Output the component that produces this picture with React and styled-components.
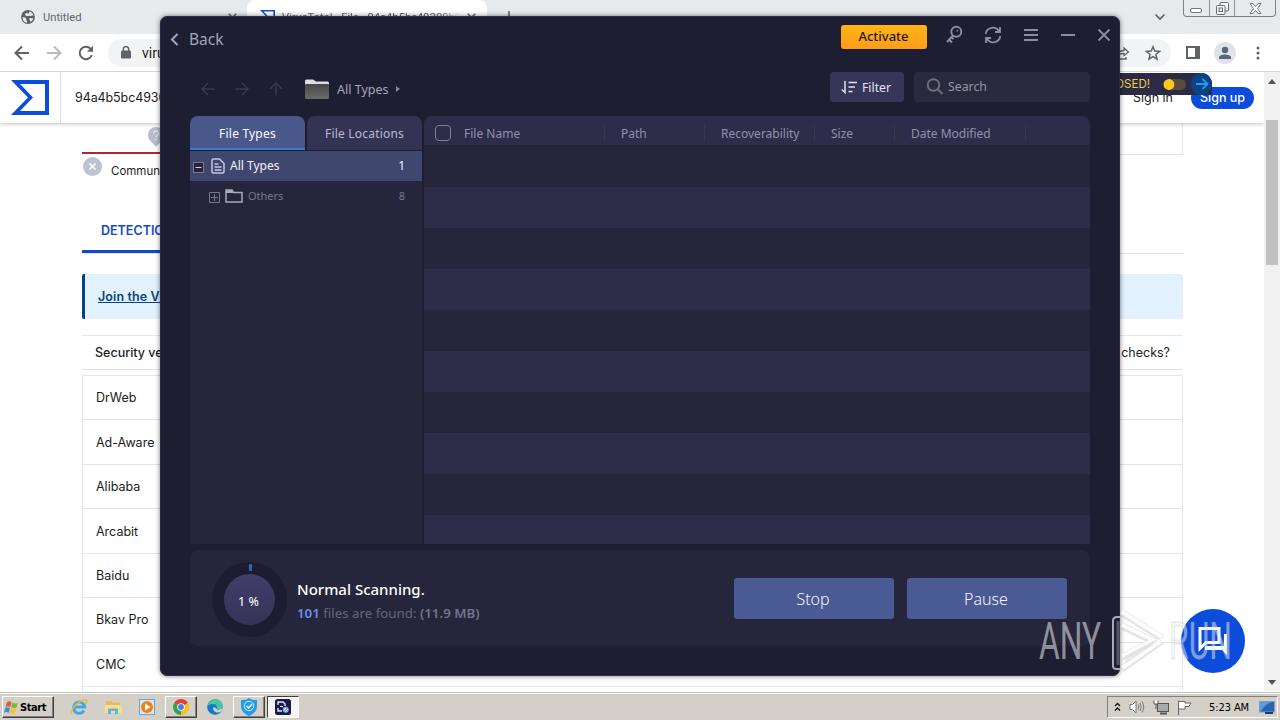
import React from 'react';
import styled, { createGlobalStyle } from 'styled-components'


const vendors = ['DrWeb', 'Ad-Aware', 'Alibaba', 'Arcabit', 'Baidu', 'Bkav Pro', 'CMC']

const columns = [
  { name: 'File Name', width: 141 },
  { name: 'Path', width: 100 },
  { name: 'Recoverability', width: 110 },
  { name: 'Size', width: 80 },
  { name: 'Date Modified', width: 131 },
]

export default function App(){
  return(
    <Desktop>
      <GlobalStyle />
      <Browser>
        <TabStrip />
        <AddressBar />
        <Content>
          <Page>
            <SiteHeader />
            <Report />
          </Page>
          <Scrollbar>
            <Arrow $up />
            <Thumb />
            <Arrow />
          </Scrollbar>
        </Content>
      </Browser>
      <Taskbar />
      <Notice>
        <span>DISCLOSED!</span>
        <Toggle />
        <Go>
          <svg width="14" height="14" viewBox="0 0 14 14" fill="none" stroke="#1b9df0" strokeWidth="1.800">
            <path d="M1 7h11.500M7.500 2l5 5-5 5" />
          </svg>
        </Go>
      </Notice>
      <ChatButton>
        <svg width="32" height="32" viewBox="0 0 32 32" fill="none" stroke="#fff" strokeWidth="3">
          <path d="M3 3.500h19v14H9l-6 6z" />
          <path d="M27 9v12H8v4h17l5 5V9z" fill="#fff" stroke="none" />
        </svg>
      </ChatButton>
      <ScanWindow />
      <Watermark />
    </Desktop>
  )
}

function TabStrip(){
  return(
    <Strip>
      <IdleTab>
        <svg width="14" height="14" viewBox="0 0 14 14">
          <circle cx="7" cy="7" r="6.900" fill="#5b5f63" />
          <path d="M1.500 7.300c2 0 3 .2 3.600 1.200.5 1-.2 2 1 2.300v2c-3-.3-4.700-2.600-4.600-5.500zM5 3c1.500-.5 1.500 1 2.600.4C8.500 2.800 8 2 8.500 1.600c2 .5 3.500 2 4 4-1.500-.5-2 .6-3.500.3C7.500 5.700 7 6.500 5.500 6 4 5.500 3.500 4 5 3zM8.500 8.300c1.500-.6 2.500.3 3.800 0-.5 1.800-1.400 2.800-2.800 3.600-.2-1.500-1.700-2-1-3.600z" fill="#e7eaed" />
        </svg>
        <span>Untitled</span>
        <TabClose />
      </IdleTab>
      <ActiveTab>
        <VtLogo size={15} />
        <span>VirusTotal - File - 94a4b5bc49309b95</span>
        <TabClose />
      </ActiveTab>
      <NewTab>
        <svg width="12" height="12" viewBox="0 0 12 12" stroke="#5f6368" strokeWidth="1.600">
          <path d="M6 0v12M0 6h12" />
        </svg>
      </NewTab>
      <TabMenu>
        <svg width="12" height="8" viewBox="0 0 12 8" fill="none" stroke="#5f6368" strokeWidth="1.700">
          <path d="M1.500 1.500L6 6l4.500-4.500" />
        </svg>
      </TabMenu>
      <WindowControls>
        <Control $width={25}>
          <svg width="12" height="5"><rect x=".5" y=".5" width="11" height="4" rx="1.500" fill="#fff" stroke="#70757c" /></svg>
        </Control>
        <Control $width={25}>
          <svg width="13" height="13" viewBox="0 0 13 13" fill="#f6f7f8" stroke="#666b73">
            <rect x="4" y=".500" width="8.500" height="8.500" rx="1" />
            <rect x=".500" y="3.500" width="8.500" height="9" rx="1" />
            <rect x="3" y="6" width="3.500" height="3.500" />
          </svg>
        </Control>
        <Control $width={41}>
          <svg width="13" height="11" viewBox="0 0 13 11" fill="#fff" stroke="#666b73" strokeWidth=".9">
            <path d="M1 .5h3L6.500 3.500 9 .500h3L8.500 5.500 12 10.500H9L6.500 7.500 4 10.500H1l3.500-5z" />
          </svg>
        </Control>
      </WindowControls>
    </Strip>
  )
}

function TabClose(){
  return(
    <svg width="9" height="9" viewBox="0 0 9 9" stroke="#5f6368" strokeWidth="1.500">
      <path d="M.8.8l7.400 7.400M8.200.8L.8 8.200" />
    </svg>
  )
}

function VtLogo({ size }){
  return(
    <svg width={size} height={size * 35 / 38} viewBox="0 0 38 35">
      <path fill="#0b4dda" fillRule="evenodd" d="M0 0h38v35H0l17-17.500zM9 4l13 13.500L9 31h25V4z" />
    </svg>
  )
}

function AddressBar(){
  return(
    <Toolbar>
      <NavIcons>
        <svg width="16" height="16" viewBox="0 0 16 16" fill="none" stroke="#5f6368" strokeWidth="2">
          <path d="M15 8H2M8 1.500L1.500 8 8 14.500" />
        </svg>
        <svg width="16" height="16" viewBox="0 0 16 16" fill="none" stroke="#b9bbbe" strokeWidth="2">
          <path d="M1 8h13M8 1.500L14.500 8 8 14.500" />
        </svg>
        <svg width="16" height="16" viewBox="0 0 16 16" fill="none" stroke="#5f6368" strokeWidth="2">
          <path d="M13.800 10A6.200 6.200 0 1 1 12.500 3.700L14 5.200" />
          <path d="M15 .8v6H9z" fill="#5f6368" stroke="none" />
        </svg>
      </NavIcons>
      <Omnibox>
        <svg width="10" height="13" viewBox="0 0 10 13">
          <rect x="0" y="4.500" width="10" height="8" rx="1.200" fill="#5f6368" />
          <path d="M2.300 5V3.200a2.700 2.700 0 0 1 5.400 0V5" fill="none" stroke="#5f6368" strokeWidth="1.500" />
        </svg>
        <span>virustotal.com</span>
        <OmniActions>
          <svg width="15" height="14" viewBox="0 0 15 14" fill="none" stroke="#5f6368" strokeWidth="1.300">
            <path d="M1 8v5h10v-2M3 9c.5-3 3-4.500 6-4.500V2l4.500 4L9 9.500V7.300C6.500 7.300 4.500 7.500 3 9z" />
          </svg>
          <svg width="16" height="16" viewBox="0 0 16 16" fill="none" stroke="#5f6368" strokeWidth="1.500">
            <path d="M8 1.800l1.800 4.300 4.700.4-3.600 3 1.100 4.600L8 11.700l-4 2.400 1.100-4.600-3.600-3 4.700-.4z" />
          </svg>
        </OmniActions>
      </Omnibox>
      <SidePanel />
      <Avatar>
        <svg width="14" height="14" viewBox="0 0 14 14" fill="#5a6482">
          <circle cx="7" cy="4" r="3.200" />
          <path d="M1 13v-1.500C1 9.500 4 8.500 7 8.500s6 1 6 3V13z" />
        </svg>
      </Avatar>
      <svg width="4" height="14" viewBox="0 0 4 14" fill="#5f6368">
        <circle cx="2" cy="2" r="1.500" /><circle cx="2" cy="7" r="1.500" /><circle cx="2" cy="12" r="1.500" />
      </svg>
    </Toolbar>
  )
}

function SiteHeader(){
  return(
    <Header>
      <LogoCell><VtLogo size={38} /></LogoCell>
      <Hash>94a4b5bc49309b95</Hash>
      <SignIn>Sign in</SignIn>
      <SignUp>Sign up</SignUp>
    </Header>
  )
}

function Report(){
  return(
    <Column>
      <ScoreRow>
        <Score>
          <svg width="18" height="22" viewBox="0 0 18 22">
            <path d="M9 1a8 8 0 0 1 8 8c0 5-4 7-8 12C5 16 1 14 1 9a8 8 0 0 1 8-8z" fill="#b5bccb" />
            <path d="M6.500 7.500a2.500 2.500 0 1 1 3.500 2.300c-.8.4-1 .8-1 1.700M9 13v1.500" fill="none" stroke="#e6e9f0" strokeWidth="1.300" />
          </svg>
        </Score>
        <Summary />
      </ScoreRow>
      <Community>
        <svg width="19" height="19" viewBox="0 0 19 19">
          <circle cx="9.500" cy="9.500" r="9.500" fill="#bcc2d1" />
          <path d="M6.500 6.500l6 6M12.500 6.500l-6 6" stroke="#fff" strokeWidth="1.700" />
        </svg>
        <span>Community Score</span>
      </Community>
      <ReportTabs><b>DETECTION</b></ReportTabs>
      <JoinBanner><a href="#">Join the VT Community</a></JoinBanner>
      <VendorHead>
        <b>Security vendors' analysis</b>
        <span>Do you want to automate checks?</span>
      </VendorHead>
      <VendorTable>
        {vendors.map(name => <VendorRow key={name}>{name}</VendorRow>)}
      </VendorTable>
    </Column>
  )
}

function ScanWindow(){
  return(
    <Window>
      <TitleBar>
        <Back>
          <svg width="9" height="13" viewBox="0 0 9 13" fill="none" stroke="#a4a4bc" strokeWidth="2">
            <path d="M7.500 1L2 6.500 7.500 12" />
          </svg>
          <span>Back</span>
        </Back>
        <Activate>Activate</Activate>
        <TitleIcons>
          <svg width="18" height="20" viewBox="0 0 18 20" fill="none" stroke="#8c8ca6" strokeWidth="1.900">
            <circle cx="11.300" cy="6.700" r="5" />
            <path d="M8 10.500L2 17M4 14.500l3 3M6.300 12l2.200 2.200" />
            <circle cx="12.300" cy="5.700" r=".9" fill="#8c8ca6" stroke="none" />
          </svg>
          <svg width="18" height="18" viewBox="0 0 18 18" fill="none" stroke="#8c8ca6" strokeWidth="1.800">
            <path d="M1.700 8A7.300 7.300 0 0 1 15 5M16.300 10A7.300 7.300 0 0 1 3 13M16 1v5h-5M2 17v-5h5" />
          </svg>
          <svg width="16" height="14" viewBox="0 0 16 14" stroke="#8c8ca6" strokeWidth="2">
            <path d="M1 2h14M1 7h14M1 12h14" />
          </svg>
          <svg width="16" height="14" viewBox="0 0 16 14" stroke="#8c8ca6" strokeWidth="2">
            <path d="M1 7h14" />
          </svg>
          <svg width="14" height="14" viewBox="0 0 14 14" stroke="#8c8ca6" strokeWidth="1.900">
            <path d="M1.500 1.500l11 11M12.500 1.500l-11 11" />
          </svg>
        </TitleIcons>
      </TitleBar>
      <PathBar>
        <PathArrows>
          <svg width="14" height="14" viewBox="0 0 14 14"><path d="M13.500 7H1M7 1L1 7l6 6" /></svg>
          <svg width="14" height="14" viewBox="0 0 14 14"><path d="M.5 7H13M7 1l6 6-6 6" /></svg>
          <svg width="14" height="14" viewBox="0 0 14 14"><path d="M7 13.500V1M1 7l6-6 6 6" /></svg>
        </PathArrows>
        <FolderIcon width="24" height="20" viewBox="0 0 24 20">
          <defs>
            <linearGradient id="folder" x1="0" y1="0" x2="0" y2="1">
              <stop offset="0" stopColor="#474747" />
              <stop offset="1" stopColor="#6b6b6b" />
            </linearGradient>
          </defs>
          <path d="M0 2a1.500 1.500 0 0 1 1.500-1.500H8L11 2.500h11.500A1.500 1.500 0 0 1 24 4v5H0z" fill="#dddddf" />
          <path d="M0 6q0-1 1-1h22q1 0 1 1v12.500q0 1.500-1.500 1.500h-21Q0 20 0 18.500z" fill="url(#folder)" />
        </FolderIcon>
        <PathName>All Types</PathName>
        <Caret />
        <Filter>
          <svg width="16" height="13" viewBox="0 0 16 13" fill="none" stroke="#e4e4f2" strokeWidth="1.500">
            <path d="M4 0v11.500L.7 8.500M7.500 1.500H16M7.500 6H14M7.500 10.500h4" />
          </svg>
          <span>Filter</span>
        </Filter>
        <Search>
          <svg width="18" height="18" viewBox="0 0 18 18" fill="none" stroke="#70707e" strokeWidth="1.900">
            <circle cx="7.500" cy="7" r="5.800" />
            <path d="M11.700 11.200L16.500 16" />
          </svg>
          <span>Search</span>
        </Search>
      </PathBar>
      <Panels>
        <Sidebar>
          <SideTabs>
            <SideTab $active>File Types</SideTab>
            <SideTab>File Locations</SideTab>
          </SideTabs>
          <TreeRow $selected>
            <svg width="11" height="11" viewBox="0 0 11 11">
              <rect x=".5" y=".5" width="10" height="10" fill="#23233a" stroke="#77798f" />
              <path d="M2.500 5.500h6" stroke="#d0d2e2" />
            </svg>
            <svg width="14" height="16" viewBox="0 0 14 16" fill="none" stroke="#c5c8e0" strokeWidth="1.500">
              <path d="M1 2.500Q1 1 2.500 1h6L13 5.500v8q0 1.500-1.500 1.500h-9Q1 15 1 13.500zM3.500 6h4M3.500 9h7M3.500 12h7" />
            </svg>
            <span>All Types</span>
            <Count>1</Count>
          </TreeRow>
          <TreeRow $nested>
            <svg width="11" height="11" viewBox="0 0 11 11" fill="none" stroke="#77778f">
              <path d="M.5.5h10v10H.500zM2 5.500h7M5.500 2v7" />
            </svg>
            <svg width="18" height="14" viewBox="0 0 18 14" fill="none" stroke="#aaaabd" strokeWidth="1.500">
              <path d="M1 13V1h6l1.500 2.500H17V13z" />
              <path d="M1 2.500h7" strokeWidth="3" />
            </svg>
            <span>Others</span>
            <Count>8</Count>
          </TreeRow>
        </Sidebar>
        <FileTable>
          <TableHead>
            <CheckBox />
            {columns.map(c => <HeadCell key={c.name} $width={c.width}>{c.name}</HeadCell>)}
          </TableHead>
          <Stripes />
        </FileTable>
      </Panels>
      <Status>
        <Gauge>
          <Percent>1 %</Percent>
          <Tick />
        </Gauge>
        <StatusText>
          <h3>Normal Scanning.</h3>
          <p><em>101</em> files are found: <b>(11.9 MB)</b></p>
        </StatusText>
        <ActionButton>Stop</ActionButton>
        <ActionButton>Pause</ActionButton>
      </Status>
    </Window>
  )
}

function Watermark(){
  return(
    <Mark width="220" height="76" viewBox="0 0 220 76">
      <text x="2" y="51" textLength="62" lengthAdjust="spacingAndGlyphs" fill="#fff" fillOpacity=".5">ANY</text>
      <g fill="none" strokeLinejoin="round">
        <path d="M83 9h-3q-4 0-4 4v45q0 3 4 3h3" stroke="#a9a9b8" strokeWidth="2" />
        <path d="M81 13v44" stroke="#a9a9b8" strokeOpacity=".4" strokeWidth="3" />
        <path d="M85 5l40 25M85 18l31 15-31 16M85 61l40-28" stroke="#777" strokeOpacity=".2" strokeWidth="7" />
        <path d="M85 4l40 25M85 17l31 15-31 16M85 60l40-28" stroke="#fff" strokeOpacity=".9" strokeWidth="4" />
        <path d="M88 48l28-15v4L88 56z" fill="#ddd" fillOpacity=".6" />
      </g>
      <text x="132" y="51" textLength="63" lengthAdjust="spacingAndGlyphs" fill="#eceef3" fillOpacity=".5" stroke="#888" strokeOpacity=".22" strokeWidth="1">RUN</text>
    </Mark>
  )
}

function Taskbar(){
  return(
    <Bar>
      <StartButton>
        <svg width="15" height="15" viewBox="0 0 15 15">
          <path d="M3 2c2-1 3-.8 4.500.2L6.300 7C4.500 6 3.500 6 1.600 6.700z" fill="#e8562a" />
          <path d="M8.300 2.600c2 1 3.500 1 5.500.2l-1.300 4.700c-2 .8-3.500.6-5.400-.3z" fill="#7db742" />
          <path d="M1.400 7.700c2-.8 3-.6 4.600.3l-1.200 4.700C3 11.800 2 11.700 0 12.500z" fill="#3d8fdd" />
          <path d="M6.900 8.300c2 1 3.500 1 5.300.3L11 13.300c-2 .8-3.500.6-5.300-.4z" fill="#f7c132" />
        </svg>
        <span>Start</span>
      </StartButton>
      <Launch>
        <svg width="18" height="18" viewBox="0 0 18 18" fill="none">
          <path d="M14 12.500A5.600 5.600 0 1 1 14.700 9H5" stroke="#43a7e3" strokeWidth="3" />
          <path d="M1.500 16C-.5 13 7 4 13 2c5-1.600 4 2 3 4" stroke="#e8bb3c" strokeWidth="1.500" />
        </svg>
      </Launch>
      <Launch>
        <svg width="17" height="16" viewBox="0 0 17 16">
          <path d="M1 2h5l1 1.500h8V14H1z" fill="#e3bd5b" />
          <path d="M0 6h16.500v8H0z" fill="#f6e08f" />
          <path d="M3 15V9.500h10V15h-3v-3H6v3z" fill="#67b5dd" />
        </svg>
      </Launch>
      <Launch>
        <svg width="16" height="16" viewBox="0 0 16 16">
          <rect x=".5" y=".5" width="15" height="15" fill="#d6e7f4" stroke="#70a3ca" />
          <circle cx="8" cy="8" r="6" fill="#ef8118" />
          <path d="M6 4.500L11.500 8 6 11.500z" fill="#fff" />
        </svg>
      </Launch>
      <Launch $open>
        <svg width="16" height="16" viewBox="0 0 16 16">
          <path d="M8 8L1.100 4A8 8 0 0 1 15 4z" fill="#e54035" />
          <path d="M8 8l7-4A8 8 0 0 1 8 16z" fill="#fbc116" />
          <path d="M8 8v8A8 8 0 0 1 1.100 4z" fill="#2da44f" />
          <circle cx="8" cy="8" r="3.800" fill="#fff" />
          <circle cx="8" cy="8" r="2.900" fill="#3f80ea" />
        </svg>
      </Launch>
      <Launch>
        <svg width="16" height="16" viewBox="0 0 16 16">
          <circle cx="8" cy="8" r="7.800" fill="#1878c9" />
          <path d="M.5 7C2 2 6 0 9 .3c4 .4 7 3.700 6.800 7 0 3-4.500 4-6.300 2.500C11 8 9 5 6 5 3 5 1.500 6 .5 7z" fill="#43c8a0" />
          <path d="M6 8.500c0 5 5 6 8.300 4L16 9l-5 2-3-2.500z" fill="#d4d0c8" />
        </svg>
      </Launch>
      <Launch $open>
        <svg width="16" height="18" viewBox="0 0 16 18">
          <path d="M8 0c2.500 2 5 2 8 2v6c0 5-3.500 8-8 10-4.500-2-8-5-8-10V2c3 0 5.500 0 8-2z" fill="#219deb" />
          <circle cx="8" cy="8" r="4.700" fill="none" stroke="#d7efff" />
          <path d="M5.500 8l2 2 3.500-3.700" fill="none" stroke="#fff" strokeWidth="1.500" />
        </svg>
      </Launch>
      <Launch $open $current>
        <svg width="16" height="16" viewBox="0 0 16 16" fill="none">
          <rect width="16" height="16" rx="2.500" fill="#19194e" />
          <path d="M3 6V3h5l2 2v2M3 9v3h4" stroke="#e5e6ff" strokeWidth="1.400" />
          <path d="M5 7.500h3" stroke="#fff" />
          <circle cx="10.700" cy="10.700" r="3" fill="#87a9ef" />
          <path d="M9 11l2-2M10.500 12.500l2-2" stroke="#fff" />
        </svg>
      </Launch>
      <Tray>
        <svg width="7" height="10" viewBox="0 0 7 10" fill="none" stroke="#111" strokeWidth="1.400">
          <path d="M1 4l2.500-2.500L6 4M1 8.500L3.500 6 6 8.500" />
        </svg>
        <svg width="16" height="14" viewBox="0 0 16 14" fill="none" stroke="#777">
          <path d="M1 4.500h2.500L7 1v12L3.500 9.500H1z" fill="#fff" />
          <path d="M9 4.500q1.500 2.500 0 5M11 3q2.500 4 0 8M13 1.500q3.500 5.500 0 11" />
        </svg>
        <svg width="16" height="16" viewBox="0 0 16 16" fill="#fff" stroke="#555">
          <rect x="4.500" y="4.500" width="11" height="8" fill="#aaa" />
          <path d="M7 14.500h7" strokeWidth="2" />
          <path d="M1 1.500v3.500h4V1.500M3 5v5" />
        </svg>
        <svg width="15" height="15" viewBox="0 0 15 15" fill="#fff" stroke="#666">
          <path d="M1.500 15V.5M2 1.500h6V3h6l-2 3.500h-4V9H2" />
        </svg>
        <Clock>5:23 AM</Clock>
        <svg width="16" height="15" viewBox="0 0 16 15">
          <rect x=".5" y="1.500" width="15" height="10.500" fill="#2a64ae" stroke="#7f9cba" />
          <path d="M1 2h12Q6 4 2 11H1z" fill="#5a9bdc" />
          <path d="M6 12h8v2H6z" fill="#123f7b" />
        </svg>
      </Tray>
    </Bar>
  )
}


const GlobalStyle = createGlobalStyle`
  *{
    box-sizing:border-box;
  }
  body{
    margin:0;
    overflow:hidden;
  }
  svg{
    display:block;
    flex:none;
  }
`

const Desktop = styled.div`
  position:relative;
  width:1280px;
  height:720px;
  display:flex;
  flex-direction:column;
  overflow:hidden;
  background:#fff;
  font-family:Inter, "Liberation Sans", sans-serif;
  color:#1c1d20;
  white-space:nowrap;
`

const Browser = styled.div`
  height:692px;
  display:flex;
  flex-direction:column;
`

const Strip = styled.div`
  height:34px;
  display:flex;
  align-items:center;
  background:#e7eaed;
  font:11.2px Roboto, sans-serif;
  color:#5f6368;
  padding-left:21px;
`

const IdleTab = styled.div`
  width:226px;
  display:flex;
  align-items:center;
  gap:8px;
  padding-right:10px;
  svg:last-child{
    margin-left:auto;
  }
`

const ActiveTab = styled.div`
  width:240px;
  height:34px;
  display:flex;
  align-items:center;
  gap:7px;
  background:#fff;
  border-radius:8px 8px 0 0;
  padding:0 11px 0 13px;
  span{
    flex:1;
    overflow:hidden;
    mask-image:linear-gradient(to right, #000 88%, transparent);
  }
`

const NewTab = styled.div`
  margin-left:16px;
`

const TabMenu = styled.div`
  margin-left:auto;
  margin-right:17px;
`

const WindowControls = styled.div`
  display:flex;
  height:17px;
  margin:0 4px auto 0;
  border:1px solid #7c8087;
  border-top:0;
  border-radius:0 0 4px 4px;
`

const Control = styled.div`
  width:${props => props.$width}px;
  display:flex;
  align-items:center;
  justify-content:center;
  & + &{
    border-left:1px solid #8d9197;
  }
  &:first-child{
    padding:4px 2px 0 0;
  }
`

const Toolbar = styled.div`
  height:38px;
  display:flex;
  align-items:center;
  background:#fff;
  border-bottom:1px solid #d5d8db;
  padding:0 20px 0 14px;
`

const NavIcons = styled.div`
  display:flex;
  gap:16px;
  margin-right:14px;
`

const Omnibox = styled.div`
  flex:1;
  height:28px;
  display:flex;
  align-items:center;
  background:#f1f3f4;
  border-radius:14px;
  padding:0 10px 0 13px;
  margin-right:15px;
  font:14px Roboto, sans-serif;
  span{
    margin-left:11px;
  }
`

const OmniActions = styled.div`
  display:flex;
  gap:15px;
  align-items:center;
  margin-left:auto;
`

const SidePanel = styled.div`
  width:14px;
  height:13px;
  border:2px solid #5f6368;
  border-right-width:5px;
`

const Avatar = styled.div`
  width:22px;
  height:22px;
  border-radius:50%;
  background:#dfe3e8;
  display:flex;
  align-items:center;
  justify-content:center;
  margin:0 20px 0 14px;
`

const Content = styled.div`
  flex:1;
  min-height:0;
  display:flex;
  border-bottom:1px solid #fff;
`

const Page = styled.div`
  flex:1;
  overflow:hidden;
`

const Header = styled.div`
  position:relative;
  height:51px;
  display:flex;
  align-items:center;
  background:#fff;
  box-shadow:0 1px 4px rgba(0,0,0,0.25);
  padding-right:10px;
`

const LogoCell = styled.div`
  width:61px;
  height:51px;
  padding-left:11px;
  display:flex;
  align-items:center;
  border-right:1px solid #dcdfe6;
`

const Hash = styled.div`
  margin-left:14px;
  font-size:12.5px;
  letter-spacing:-.1px;
`

const SignIn = styled.div`
  margin-left:auto;
  font-size:12.5px;
`

const SignUp = styled.div`
  width:63px;
  height:22px;
  margin-left:18px;
  border-radius:11px;
  background:#0b4dda;
  color:#fff;
  font-size:12.5px;
  font-weight:500;
  display:flex;
  align-items:center;
  justify-content:center;
`

const Column = styled.div`
  width:1101px;
  margin-left:82px;
`

const ScoreRow = styled.div`
  display:flex;
  gap:20px;
  height:32px;
`

const Score = styled.div`
  width:150px;
  height:31px;
  border-bottom:2px solid #b32430;
  padding:3px 0 0 65px;
`

const Summary = styled.div`
  flex:1;
  border:1px solid #e2e4e8;
  border-top:0;
`

const Community = styled.div`
  display:flex;
  align-items:center;
  gap:9px;
  height:26px;
  padding:0 0 4px 1px;
  font-size:11.5px;
  span{
    padding-top:10px;
  }
`

const ReportTabs = styled.div`
  height:73px;
  border-bottom:1px solid #e2e4e8;
  b{
    display:block;
    width:120px;
    height:72px;
    padding:42px 0 0 19px;
    border-bottom:3px solid #1249c8;
    color:#1249c8;
    font-size:12.5px;
    font-weight:600;
  }
`

const JoinBanner = styled.div`
  height:45px;
  margin-top:20px;
  display:flex;
  align-items:center;
  padding-left:13px;
  background:#e1f1fd;
  border-left:3px solid #074282;
  border-radius:2px;
  a{
    color:#074282;
    font-size:12.5px;
    font-weight:600;
    letter-spacing:.1px;
  }
`

const VendorHead = styled.div`
  height:35px;
  margin-top:16px;
  display:flex;
  align-items:center;
  justify-content:space-between;
  padding:0 13px;
  border-top:1px solid #e5e6e9;
  border-bottom:1px solid #e5e6e9;
  font-size:12.5px;
  b{
    font-weight:500;
  }
`

const VendorTable = styled.div`
  height:330px;
  margin-top:5px;
  border:1px solid #e2e4e7;
`

const VendorRow = styled.div`
  height:44.45px;
  display:flex;
  align-items:center;
  padding-left:13px;
  border-bottom:1px solid #e2e4e7;
  font-size:12.5px;
`

const Scrollbar = styled.div`
  width:16px;
  display:flex;
  flex-direction:column;
  align-items:center;
  background:#f1f1f1;
  padding:7px 0 6px;
`

const Arrow = styled.div`
  border:4px solid transparent;
  border-top-width:${props => props.$up ? 0 : 5}px;
  border-bottom-width:${props => props.$up ? 5 : 0}px;
  border-top-color:#505050;
  border-bottom-color:#505050;
`

const Thumb = styled.div`
  width:12px;
  height:145px;
  margin:36px 0 auto;
  background:#c1c1c1;
`

const Notice = styled.div`
  position:absolute;
  top:73px;
  right:68px;
  height:22px;
  display:flex;
  align-items:center;
  background:#2b2b45;
  border-radius:0 11px 2px 0;
  color:#f0cf4a;
  font-size:11.5px;
`

const Toggle = styled.div`
  width:23px;
  height:11px;
  margin:0 5px 0 13px;
  border-radius:6px;
  background:radial-gradient(circle at 6px 5.5px, #ffc61c 5px, #594c3d 5.7px);
`

const Go = styled.div`
  width:21px;
  height:22px;
  border-radius:50%;
  background:#0b4384;
  display:flex;
  align-items:center;
  justify-content:center;
`

const ChatButton = styled.div`
  position:absolute;
  left:1181px;
  top:609px;
  width:64px;
  height:64px;
  border-radius:50%;
  background:#0b4dda;
  display:flex;
  align-items:center;
  justify-content:center;
`

const Mark = styled.svg`
  position:absolute;
  left:1037px;
  top:608px;
  font:400 52px Roboto, sans-serif;
`

const Window = styled.div`
  position:absolute;
  left:160px;
  top:16px;
  width:960px;
  height:660px;
  display:flex;
  flex-direction:column;
  padding:0 29px;
  background:#1e1e32;
  border:1px solid #2e2c45;
  border-radius:7px;
  box-shadow:0 0 5px rgba(0,0,0,0.55);
  font-family:"Noto Sans", "Open Sans", sans-serif;
  color:#a4a4bc;
`

const TitleBar = styled.div`
  height:40px;
  display:flex;
  align-items:center;
  margin:0 -21px 0 -20px;
`

const Back = styled.div`
  display:flex;
  align-items:center;
  gap:10px;
  margin-right:auto;
  padding-top:4px;
  font-size:15.5px;
  line-height:20px;
  span{
    margin-top:-1px;
  }
`

const Activate = styled.div`
  width:86px;
  height:24px;
  margin-right:18.5px;
  border-radius:3px;
  background:linear-gradient(#ffb414, #ff9c1e);
  color:#241a18;
  font-size:13px;
  font-weight:500;
  line-height:22px;
  text-align:center;
`

const TitleIcons = styled.div`
  display:flex;
  align-items:center;
  gap:21px;
  margin-top:-5px;
`

const PathBar = styled.div`
  height:30px;
  margin-top:15px;
  display:flex;
  align-items:center;
`

const PathArrows = styled.div`
  display:flex;
  gap:20px;
  padding:4px 22px 0 11px;
  fill:none;
  stroke:#3b3b50;
  stroke-width:1.4;
`

const FolderIcon = styled.svg`
  margin-top:3px;
`

const PathName = styled.span`
  margin:4px 7px 0 8px;
  font-size:12.5px;
`

const Caret = styled.div`
  margin-top:4px;
  border:3px solid transparent;
  border-left:4px solid #85859a;
  border-right:0;
`

const Filter = styled.div`
  width:74px;
  height:30px;
  margin-left:auto;
  padding-right:2px;
  display:flex;
  align-items:center;
  justify-content:center;
  gap:5px;
  border-radius:4px;
  background:#363659;
  color:#e4e4f2;
  font-size:12.3px;
`

const Search = styled.div`
  width:176px;
  height:30px;
  margin-left:10px;
  padding:0 0 1px 12px;
  display:flex;
  align-items:center;
  gap:4px;
  border-radius:4px;
  background:#2a2a3e;
  color:#9595a3;
  font-size:12.3px;
`

const Panels = styled.div`
  height:428px;
  margin-top:14px;
  display:flex;
  gap:2px;
`

const Sidebar = styled.div`
  width:232px;
  background:#25253b;
  border-radius:8px 8px 0 0;
`

const SideTabs = styled.div`
  display:flex;
  gap:2px;
  height:35px;
  background:#1e1e32;
`

const SideTab = styled.div`
  width:115px;
  height:34px;
  padding-top:2px;
  display:flex;
  align-items:center;
  justify-content:center;
  border-radius:8px 8px 0 0;
  background:${props => props.$active ? '#4a578a' : '#333353'};
  border-bottom:2px solid ${props => props.$active ? '#347ccf' : '#333353'};
  color:${props => props.$active ? '#fff' : '#b9b9d0'};
  font-size:12px;
  letter-spacing:.2px;
`

const TreeRow = styled.div`
  height:30px;
  display:flex;
  align-items:center;
  padding:0 17px ${props => props.$nested ? 2 : 1}px ${props => props.$nested ? 19 : 3}px;
  background:${props => props.$selected ? '#40476f' : 'none'};
  color:${props => props.$selected ? '#f2f2fa' : '#777790'};
  font-size:${props => props.$nested ? 11 : 12}px;
  svg:first-child{
    margin-top:4px;
  }
  svg + svg{
    margin:1px 5px 0 ${props => props.$nested ? 5 : 7}px;
  }
`

const Count = styled.div`
  margin-left:auto;
`

const FileTable = styled.div`
  flex:1;
  display:flex;
  flex-direction:column;
`

const TableHead = styled.div`
  height:30px;
  display:flex;
  align-items:center;
  padding:5px 0 1px 11px;
  background:#2d2d4a;
  border-bottom:1px solid #212137;
  border-radius:8px 8px 0 0;
`

const CheckBox = styled.div`
  width:16px;
  height:16px;
  border:1.5px solid #7d7d96;
  border-radius:4px;
  margin-right:13px;
`

const HeadCell = styled.div`
  width:${props => props.$width}px;
  height:16px;
  line-height:18px;
  border-right:1px solid #37374f;
  color:#9191aa;
  font-size:12px;
  & + &{
    padding-left:16px;
  }
`

const Stripes = styled.div`
  flex:1;
  background:repeating-linear-gradient(#25253b 0 41px, #2d2d4a 41px 82px);
`

const Status = styled.div`
  height:96px;
  margin-top:6px;
  padding:0 23px 0 22px;
  display:flex;
  align-items:center;
  gap:13px;
  border-radius:8px;
  background:#25253b;
`

const Gauge = styled.div`
  position:relative;
  width:75px;
  height:75px;
  margin-top:3px;
  border-radius:50%;
  background:#1d1d31;
  display:flex;
  align-items:center;
  justify-content:center;
`

const Percent = styled.div`
  width:51px;
  height:51px;
  padding-right:2px;
  border-radius:50%;
  background:linear-gradient(#413e6b, #343357);
  color:#fff;
  font-size:12.5px;
  line-height:55px;
  text-align:center;
`

const Tick = styled.i`
  position:absolute;
  left:37px;
  top:2px;
  width:3px;
  height:7px;
  border-radius:1px;
  background:#286cb4;
`

const StatusText = styled.div`
  margin:6px auto 0 -3px;
  h3{
    margin:0 0 3px;
    color:#fff;
    font-size:15px;
    line-height:20px;
    font-weight:500;
  }
  p{
    margin:0;
    color:#666680;
    font-size:13.3px;
    line-height:22px;
  }
  em{
    color:#6b8dea;
    font-style:normal;
    font-weight:600;
  }
  b{
    color:#73738c;
    font-weight:600;
  }
`

const ActionButton = styled.div`
  width:160px;
  height:41px;
  padding:2px 2px 0 0;
  border-radius:3px;
  background:#4a5a95;
  color:#f5f5ff;
  font-size:16px;
  font-weight:300;
  display:flex;
  align-items:center;
  justify-content:center;
`

const Bar = styled.div`
  height:28px;
  display:flex;
  align-items:center;
  padding:1px 2px 0;
  background:#d4d0c8;
  border-top:1px solid #c3c0b9;
  box-shadow:inset 0 1px #fff;
`

const StartButton = styled.div`
  width:52px;
  height:22px;
  margin-right:9px;
  display:flex;
  align-items:center;
  gap:1px;
  padding-left:1px;
  border:1px solid;
  border-color:#fff #404040 #404040 #fff;
  box-shadow:inset -1px -1px #808080;
  color:#000;
  font:bold 11px "DejaVu Sans Condensed", "Liberation Sans", sans-serif;
  letter-spacing:-.4px;
`

const Launch = styled.div`
  width:32px;
  height:22px;
  margin-right:2px;
  display:flex;
  align-items:center;
  justify-content:center;
  border:1px solid;
  border-color:${props => props.$current ? '#404040 #fff #fff #404040' : props.$open ? '#fff #404040 #404040 #fff' : 'transparent'};
  box-shadow:${props => props.$open && !props.$current ? 'inset -1px -1px #808080' : 'none'};
  background:${props => props.$current ? '#f6f5f3' : 'none'};
`

const Tray = styled.div`
  margin-left:auto;
  height:22px;
  display:flex;
  align-items:center;
  gap:8px;
  padding:0 2px 0 6px;
  border:1px solid;
  border-color:#808080 #fff #fff #808080;
`

const Clock = styled.span`
  margin:0 2px 0 9px;
  color:#000;
  font:11px "DejaVu Sans Condensed", "Liberation Sans", sans-serif;
  letter-spacing:-.1px;
`
